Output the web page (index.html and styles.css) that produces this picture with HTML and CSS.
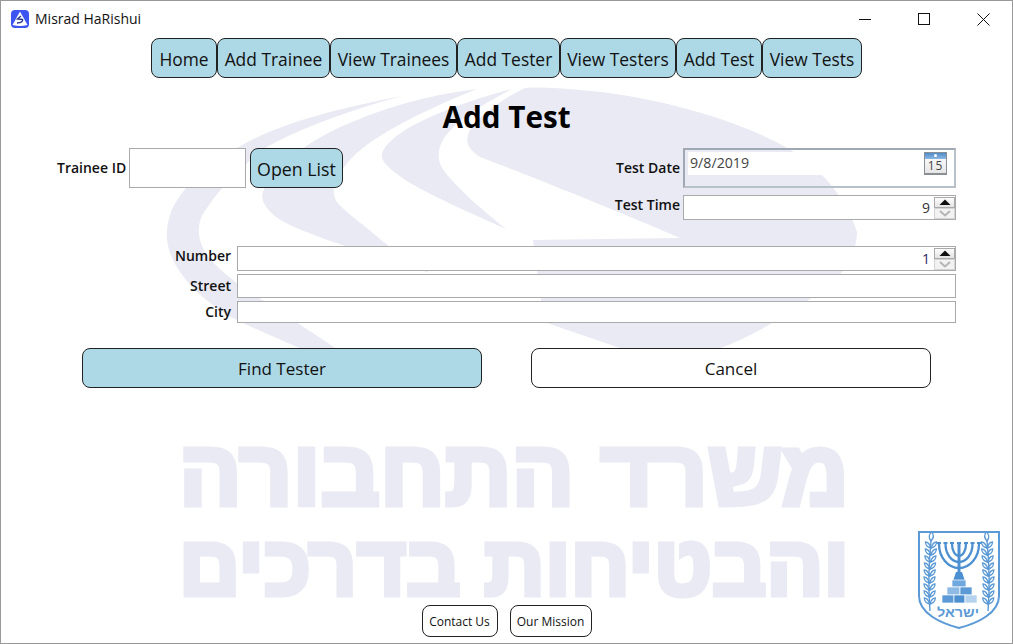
FILE: index.html
```html
<!DOCTYPE html>
<html lang="en">
<head>
  <meta charset="UTF-8" />
  <title>Misrad HaRishui</title>
  <meta name="viewport" content="width=device-width, initial-scale=1.0" />
  <link rel="stylesheet" href="styles.css">
</head>
<body>
  <div class="window">

    <!-- watermark behind the form -->
    <svg class="watermark" width="1011" height="642" viewBox="1 1 1011 642">
      <g fill="#e9eaf3">
        <path d="M402 96 C330 110 275 125 237 148 C205 165 180 190 171 212 C164 232 165 250 180 272 C195 293 210 303 227 315 C255 330 295 345 325 360 L352 360 C325 340 300 325 275 308 C245 290 220 272 207 255 C196 238 196 222 207 208 C222 185 245 165 262 150 C295 130 350 110 402 96 Z" />
        <path d="M477 89 C430 95 395 105 362 118 C325 132 295 150 277 172 C263 185 260 195 264 203 C270 215 280 220 292 226 C330 243 385 258 430 273 C405 258 390 248 374 234 C360 222 345 212 337 202 C330 192 335 178 345 166 C360 145 400 120 477 89 Z" />
        <path d="M512 89 C470 100 430 115 405 130 C390 140 380 150 382 158 C385 166 395 173 410 183 C440 200 475 215 506 229 C480 208 465 195 450 178 C438 165 435 155 443 140 C452 125 475 108 512 89 Z" />
        <path d="M525 88 C500 100 480 115 470 130 C465 140 466 148 480 157 C540 180 620 212 680 238 L533 240 L544 322 L620 348 L640 375 L700 375 L720 348 C745 340 790 315 830 285 C848 268 857 250 857 232 C850 210 840 195 825 178 C810 165 800 155 787 148 C740 120 650 95 580 90 C560 88 540 87 525 88 Z" />
      </g>
      <text class="watermark-text" x="179" y="505" font-size="92" textLength="670" lengthAdjust="spacingAndGlyphs">משרד התחבורה</text>
      <text class="watermark-text" x="179" y="595" font-size="84" textLength="670" lengthAdjust="spacingAndGlyphs">והבטיחות בדרכים</text>
    </svg>

    <div class="titlebar">
      <svg class="app-icon" width="18" height="18" viewBox="0 0 18 18">
        <rect width="18" height="18" rx="4" fill="#3d55f2" />
        <path d="M9 1.5 L16.5 15 Q9 17 1.5 15 Z" fill="#fff" />
        <path d="M10 6 L6.5 9 L11.5 9.5 Q12.5 12.5 6 13" fill="none" stroke="#2b3a8c" stroke-width="1.4" />
      </svg>
      <span class="app-name">Misrad HaRishui</span>
      <div class="win-controls">
        <svg width="13" height="13" viewBox="0 0 13 13"><path d="M0 6.5 H12" stroke="#111" /></svg>
        <svg width="13" height="13" viewBox="0 0 13 13"><rect x="0.5" y="0.5" width="11" height="11" fill="none" stroke="#111" /></svg>
        <svg width="13" height="13" viewBox="0 0 13 13"><path d="M0.5 0.5 L12.5 12.5 M12.5 0.5 L0.5 12.5" stroke="#111" /></svg>
      </div>
    </div>

    <nav class="nav">
      <button class="btn btn-blue">Home</button>
      <button class="btn btn-blue">Add Trainee</button>
      <button class="btn btn-blue">View Trainees</button>
      <button class="btn btn-blue">Add Tester</button>
      <button class="btn btn-blue">View Testers</button>
      <button class="btn btn-blue">Add Test</button>
      <button class="btn btn-blue">View Tests</button>
    </nav>

    <h1 class="page-title">Add Test</h1>

    <div class="top-row">
      <div class="trainee">
        <label class="lbl trainee-lbl">Trainee ID</label>
        <input class="field trainee-input" type="text" />
        <button class="btn btn-blue open-list">Open List</button>
      </div>

      <div class="when">
        <label class="lbl">Test Date</label>
        <div class="date-box">
          <span class="date-text">9/8/2019</span>
          <span class="cal-icon"><span class="cal-top"></span><span class="cal-day">15</span></span>
        </div>
        <label class="lbl lbl-up">Test Time</label>
        <div class="field spin-field">
          <span class="spin-value">9</span>
          <span class="spin">
            <span class="spin-btn"><svg width="12" height="7" viewBox="0 0 12 7"><path d="M6 0.5 L11.5 6 H0.5 Z" fill="#111" /></svg></span>
            <span class="spin-btn spin-off"><svg width="12" height="7" viewBox="0 0 12 7"><path d="M1 1 L6 5.5 L11 1" fill="none" stroke="#b5b5b5" stroke-width="2" /></svg></span>
          </span>
        </div>
      </div>
    </div>

    <div class="address">
      <label class="lbl lbl-up">Number</label>
      <div class="field spin-field row-number">
        <span class="spin-value spin-purple">1</span>
        <span class="spin">
          <span class="spin-btn"><svg width="12" height="7" viewBox="0 0 12 7"><path d="M6 0.5 L11.5 6 H0.5 Z" fill="#111" /></svg></span>
          <span class="spin-btn spin-off"><svg width="12" height="7" viewBox="0 0 12 7"><path d="M1 1 L6 5.5 L11 1" fill="none" stroke="#b5b5b5" stroke-width="2" /></svg></span>
        </span>
      </div>
      <label class="lbl">Street</label>
      <input class="field row-street" type="text" />
      <label class="lbl">City</label>
      <input class="field row-city" type="text" />
    </div>

    <div class="actions">
      <button class="btn btn-blue btn-wide">Find Tester</button>
      <button class="btn btn-white btn-wide">Cancel</button>
    </div>

    <div class="footer">
      <button class="btn btn-white btn-small btn-contact">Contact Us</button>
      <button class="btn btn-white btn-small btn-mission">Our Mission</button>
    </div>

    <svg class="emblem" width="84" height="100" viewBox="-1 -1 84 100">
      <defs>
        <g id="leaves" fill="none" stroke="#5b9ad6" stroke-width="1.3">
          <path d="M0 0 C-4 -1 -5.5 -3 -5.5 -6 C-2.5 -6 -1 -3 0 0 Z" />
          <path d="M0 0 C4 -1 5.5 -3 5.5 -6 C2.5 -6 1 -3 0 0 Z" />
        </g>
        <g id="branch">
          <path d="M12 80 C10 55 11 30 13 10" fill="none" stroke="#5b9ad6" stroke-width="1.4" />
          <path d="M13 10 C10 6 11 3 14 1 C16 4 16 7 13 10 Z" fill="none" stroke="#5b9ad6" stroke-width="1.3" />
          <use href="#leaves" x="13" y="17" />
          <use href="#leaves" x="12.8" y="24" />
          <use href="#leaves" x="12.4" y="31" />
          <use href="#leaves" x="12" y="38" />
          <use href="#leaves" x="11.7" y="45" />
          <use href="#leaves" x="11.5" y="52" />
          <use href="#leaves" x="11.5" y="59" />
          <use href="#leaves" x="11.6" y="66" />
          <use href="#leaves" x="11.8" y="73" />
        </g>
      </defs>
      <path d="M1 1 H81 V65 C81 82 60 92 41 97 C22 92 1 82 1 65 Z" fill="#fff" stroke="#5b9ad6" stroke-width="2" />
      <use href="#branch" />
      <use href="#branch" transform="translate(82 0) scale(-1 1)" />
      <g fill="none" stroke="#4d90d2" stroke-width="2.3">
        <path d="M21 13 A20 24 0 0 0 61 13" />
        <path d="M27.5 13 A13.5 18 0 0 0 54.5 13" />
        <path d="M34 13 A7 12 0 0 0 48 13" />
        <path d="M41 13 V50" stroke-width="3" />
        <path d="M19 12 H23 M25.5 12 H29.5 M32 12 H36 M39 12 H43 M46 12 H50 M52.5 12 H56.5 M59 12 H63" stroke-width="2" />
      </g>
      <path d="M35 50 H47 L44 41 H38 Z" fill="#4d90d2" />
      <g stroke="#fff" stroke-width="0.7">
        <rect x="34" y="49" width="14" height="7" fill="#6fa8de" />
        <rect x="29" y="56" width="13" height="8" fill="#8dbbe6" />
        <rect x="42" y="56" width="12" height="8" fill="#5b9ad6" />
        <rect x="24" y="64" width="12" height="8" fill="#5b9ad6" />
        <rect x="36" y="64" width="11" height="8" fill="#4d90d2" />
        <rect x="47" y="64" width="12" height="8" fill="#b5d3ef" />
      </g>
      <text class="emblem-text" x="19" y="86" font-size="13" textLength="42" lengthAdjust="spacingAndGlyphs">ישראל</text>
    </svg>
  </div>
</body>
</html>
```

FILE: styles.css
```css
html, body {
  margin: 0;
  padding: 0;
  background: #fff;
}

*, *::before, *::after {
  box-sizing: border-box;
}

body {
  font-family: "Open Sans", "Noto Sans", sans-serif;
  color: #111;
}

.window {
  position: relative;
  width: 1013px;
  height: 644px;
  border: 1px solid #999;
  display: flex;
  flex-direction: column;
  overflow: hidden;
}

.watermark {
  position: absolute;
  left: 0;
  top: 0;
}

.watermark-text {
  font-family: "Liberation Sans", sans-serif;
  font-weight: bold;
  fill: #e9eaf3;
  stroke: #e9eaf3;
  stroke-width: 5px;
}

/* title bar */
.titlebar {
  position: relative;
  height: 37px;
  display: flex;
  align-items: flex-start;
  padding: 9px 0 0 10px;
}

.app-name {
  margin-left: 6px;
  font-size: 14px;
  line-height: 18px;
}

.win-controls {
  position: absolute;
  top: 12px;
  left: 858px;
  display: flex;
  gap: 46px;
}

/* buttons */
.btn {
  font-family: inherit;
  color: #111;
  border: 1px solid #222;
  border-radius: 8px;
  padding: 1px 0 0;
  margin: 0;
  cursor: pointer;
}

.btn-blue {
  background: #add8e6;
}

.btn-white {
  background: #fff;
}

.nav {
  position: relative;
  display: grid;
  grid-template-columns: 66px 113px 127px 103px 116px 86px 100px;
  justify-content: start;
  margin-left: 150px;
  height: 40px;
}

.nav .btn {
  font-size: 17.4px;
}

.page-title {
  position: relative;
  margin: 18px 0 0;
  height: 52px;
  line-height: 42px;
  text-align: center;
  font-size: 29.7px;
  font-weight: 700;
  color: #000;
}

/* form */
.lbl {
  font-size: 14px;
  font-weight: 600;
  text-align: right;
  color: #111;
  line-height: 18px;
}

.lbl-up {
  align-self: start;
  margin-top: 1px;
}

.field {
  background: #fff;
  border: 1px solid #aaa;
  border-radius: 0;
  padding: 0;
  margin: 0;
  outline: none;
}

.top-row {
  position: relative;
  display: flex;
  justify-content: space-between;
  align-items: flex-start;
  padding: 0 56px;
}

.trainee {
  display: flex;
  align-items: center;
  height: 40px;
}

.trainee-lbl {
  width: 69px;
  white-space: nowrap;
}

.trainee-input {
  width: 117px;
  height: 40px;
  margin-left: 3px;
}

.open-list {
  width: 93px;
  height: 40px;
  margin-left: 4px;
  font-size: 17.8px;
}

.when {
  display: grid;
  grid-template-columns: auto 273px;
  grid-template-rows: 40px 25px;
  column-gap: 3px;
  row-gap: 7px;
  align-items: center;
}

.date-box {
  display: flex;
  justify-content: space-between;
  height: 40px;
  padding: 2px 7px 0 3px;
  border: 2px solid #b8c0c8;
  border-top-color: #a0a9b3;
  border-left-color: #a0a9b3;
}

.date-text {
  flex: 1;
  height: 23px;
  margin-right: 4px;
  padding-left: 2px;
  background: #fff;
  font-size: 14.2px;
  line-height: 21px;
  color: #444;
}

.cal-icon {
  position: relative;
  width: 23px;
  height: 23px;
  display: flex;
  flex-direction: column;
  background: linear-gradient(#fff, #e6e6e6);
  border: 1px solid #8a8f96;
  border-bottom-width: 2px;
}

.cal-top {
  height: 7px;
  background: linear-gradient(#4f8ccb, #8db8e2);
}

.cal-top::after {
  content: "";
  position: absolute;
  left: 9px;
  top: 1px;
  width: 3px;
  height: 3px;
  border-radius: 50%;
  background: #fff;
}

.cal-day {
  font-size: 12px;
  line-height: 14px;
  text-align: center;
  color: #444;
  letter-spacing: 1px;
}

.spin-field {
  display: flex;
  justify-content: flex-end;
  align-items: stretch;
  height: 25px;
}

.spin-value {
  font-size: 14px;
  line-height: 24px;
  margin-right: 4px;
  color: #333;
}

.spin-purple {
  color: #2a1f66;
}

.spin {
  width: 21px;
  display: flex;
  flex-direction: column;
  padding-top: 1px;
}

.spin-btn {
  flex: 1;
  display: flex;
  align-items: center;
  justify-content: center;
  border: 1px solid #aaa;
  background: linear-gradient(#fdfdfd, #e4e4e4);
}

.spin-off {
  border-color: #d4d4d4;
  background: #f2f2f2;
}

.address {
  position: relative;
  display: grid;
  grid-template-columns: 1fr 719px;
  grid-template-rows: 25px 24px 22px;
  row-gap: 3px;
  column-gap: 6px;
  align-items: center;
  margin-top: 26px;
  padding-right: 56px;
}

.row-street {
  height: 24px;
  width: 100%;
}

.row-city {
  height: 22px;
  width: 100%;
}

.actions {
  position: relative;
  display: flex;
  gap: 49px;
  margin: 25px 0 0 81px;
}

.btn-wide {
  width: 400px;
  height: 40px;
  font-size: 17px;
}

.footer {
  position: relative;
  display: flex;
  justify-content: center;
  gap: 12px;
  margin-top: auto;
  padding-bottom: 6px;
}

.btn-small {
  height: 32px;
  font-size: 12px;
}

.btn-contact {
  width: 76px;
}

.btn-mission {
  width: 82px;
}

.emblem {
  position: absolute;
  right: 11px;
  bottom: 13px;
}

.emblem-text {
  font-family: "Liberation Sans", sans-serif;
  font-weight: bold;
  fill: #5b9ad6;
}
```
